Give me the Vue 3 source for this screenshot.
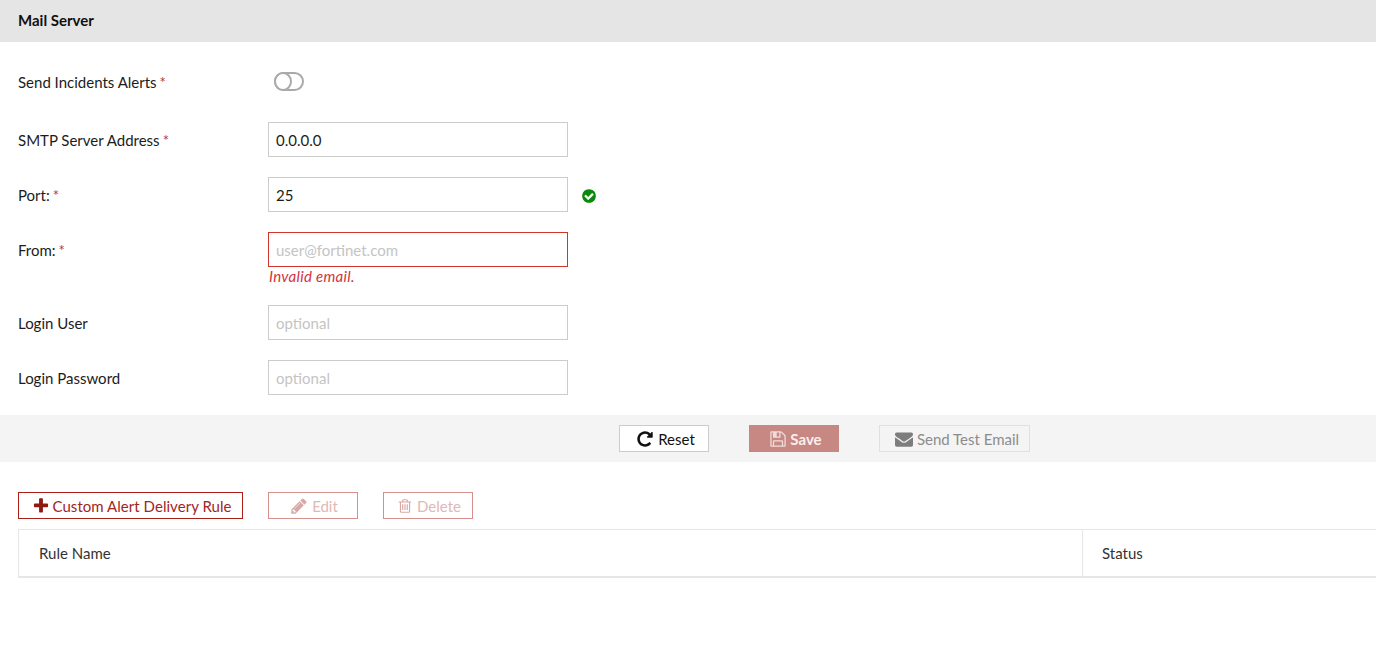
<script setup>
const icons = {
  check: 'M1412 734q0-28-18-46l-91-90q-19-19-45-19t-45 19l-408 407-226-226q-19-19-45-19t-45 19l-91 90q-18 18-18 46 0 27 18 45l362 362q19 19 45 19 27 0 46-19l543-543q18-18 18-45zm252 162q0 209-103 385.500t-279.500 279.500-385.500 103-385.500-103-279.500-279.500-103-385.500 103-385.500 279.500-279.500 385.500-103 385.500 103 279.500 279.500 103 385.500z',
  repeat: 'M1664 256v448q0 26-19 45t-45 19h-448q-42 0-59-40-17-39 14-69l138-138q-148-137-349-137-104 0-198.500 40.500t-163.500 109.500-109.500 163.500-40.500 198.500 40.500 198.500 109.500 163.500 163.500 109.500 198.500 40.500q119 0 225-52t179-147q7-10 23-12 15 0 25 9l137 138q9 8 9.500 20.500t-7.500 22.500q-109 132-264 204.500t-327 72.500q-156 0-298-61t-245-164-164-245-61-298 61-298 164-245 245-164 298-61q147 0 284.500 55.500t244.500 156.500l130-129q29-31 70-14 39 17 39 59z',
  save: 'M512 1536h768v-384h-768v384zm896 0h128v-896q0-14-10-38.500t-20-34.500l-281-281q-10-10-34-20t-39-10v416q0 40-28 68t-68 28h-576q-40 0-68-28t-28-68v-416h-128v1280h128v-416q0-40 28-68t68-28h832q40 0 68 28t28 68v416zm-384-928v-320q0-13-9.500-22.500t-22.500-9.500h-192q-13 0-22.500 9.500t-9.500 22.500v320q0 13 9.500 22.500t22.500 9.500h192q13 0 22.500-9.500t9.500-22.500zm640 32v928q0 40-28 68t-68 28h-1344q-40 0-68-28t-28-68v-1344q0-40 28-68t68-28h928q40 0 88 20t76 48l280 280q28 28 48 76t20 88z',
  envelope: 'M1792 710v794q0 66-47 113t-113 47h-1472q-66 0-113-47t-47-113v-794q44 49 101 87 362 246 497 345 57 42 92.500 65.500t94.500 48 110 24.500h2q51 0 110-24.500t94.500-48 92.500-65.500q170-123 498-345 57-39 100-87zm0-294q0 79-49 151t-122 123q-376 261-468 325-10 7-42.500 30.500t-54 38-52 32.500-57.500 27-50 9h-2q-23 0-50-9t-57.500-27-52-32.500-54-38-42.500-30.500q-91-64-262-182.500t-205-142.500q-62-42-117-115.500t-55-136.500q0-78 41.500-130t118.500-52h1472q65 0 112.500 47t47.500 113z',
  plus: 'M1600 736v192q0 40-28 68t-68 28h-416v416q0 40-28 68t-68 28h-192q-40 0-68-28t-28-68v-416h-416q-40 0-68-28t-28-68v-192q0-40 28-68t68-28h416v-416q0-40 28-68t68-28h192q40 0 68 28t28 68v416h416q40 0 68 28t28 68z',
  pencil: 'M491 1536l91-91-235-235-91 91v107h128v128h107zm523-928q0-22-22-22-10 0-17 7l-542 542q-7 7-7 17 0 22 22 22 10 0 17-7l542-542q7-7 7-17zm-54-192l416 416-832 832h-416v-416zm683 96q0 53-37 90l-166 166-416-416 166-165q36-38 90-38 53 0 91 38l235 234q37 39 37 91z',
  trash: 'M704 736v576q0 14-9 23t-23 9h-64q-14 0-23-9t-9-23v-576q0-14 9-23t23-9h64q14 0 23 9t9 23zm256 0v576q0 14-9 23t-23 9h-64q-14 0-23-9t-9-23v-576q0-14 9-23t23-9h64q14 0 23 9t9 23zm256 0v576q0 14-9 23t-23 9h-64q-14 0-23-9t-9-23v-576q0-14 9-23t23-9h64q14 0 23 9t9 23zm128 724v-948h-896v948q0 22 7 40.500t14.500 27 10.500 8.500h832q3 0 10.500-8.500t14.500-27 7-40.500zm-672-1076h448l-48-117q-7-9-17-11h-317q-10 2-17 11zm928 32v64q0 14-9 23t-23 9h-96v948q0 83-47 143.500t-113 60.500h-832q-66 0-113-58.500t-47-141.500v-952h-96q-14 0-23-9t-9-23v-64q0-14 9-23t23-9h309l70-167q15-37 54-63t79-26h320q40 0 79 26t54 63l70 167h309q14 0 23 9t9 23z'
}
</script>

<template>
  <div class="page">
    <header class="head">Mail Server</header>

    <form class="form" @submit.prevent>
      <div class="row toggle-row">
        <label class="label">Send Incidents Alerts<span class="req">*</span></label>
        <span class="toggle"><span class="knob"></span></span>
      </div>
      <div class="row">
        <label class="label">SMTP Server Address<span class="req">*</span></label>
        <input class="input" value="0.0.0.0" />
      </div>
      <div class="row">
        <label class="label">Port:<span class="req">*</span></label>
        <input class="input" value="25" />
        <svg class="valid" viewBox="0 0 1792 1792"><path :d="icons.check" /></svg>
      </div>
      <div class="row row-error">
        <label class="label">From:<span class="req">*</span></label>
        <div class="stack">
          <input class="input invalid" placeholder="user@fortinet.com" />
          <div class="error">Invalid email.</div>
        </div>
      </div>
      <div class="row">
        <label class="label">Login User</label>
        <input class="input" placeholder="optional" />
      </div>
      <div class="row">
        <label class="label">Login Password</label>
        <input class="input" placeholder="optional" />
      </div>
    </form>

    <div class="actions">
      <button class="btn reset" type="button">
        <svg class="ico" viewBox="0 0 1792 1792"><path :d="icons.repeat" /></svg>Reset
      </button>
      <button class="btn save" type="button">
        <svg class="ico" viewBox="0 0 1792 1792"><path :d="icons.save" /></svg>Save
      </button>
      <button class="btn test" type="button">
        <svg class="ico" viewBox="0 0 1792 1792"><path :d="icons.envelope" /></svg>Send Test Email
      </button>
    </div>

    <div class="toolbar">
      <button class="tbtn add" type="button">
        <svg class="ico" viewBox="0 0 1792 1792"><path :d="icons.plus" /></svg>Custom Alert Delivery Rule
      </button>
      <button class="tbtn off edit" type="button">
        <svg class="ico" viewBox="0 0 1792 1792"><path :d="icons.pencil" /></svg>Edit
      </button>
      <button class="tbtn off del" type="button">
        <svg class="ico" viewBox="0 0 1792 1792"><path :d="icons.trash" /></svg>Delete
      </button>
    </div>

    <div class="table">
      <div class="cell name">Rule Name</div>
      <div class="cell status">Status</div>
    </div>
  </div>
</template>

<style>
html, body { margin: 0; background: #fff; }
</style>

<style scoped>
.page {
  font-family: Lato, "Liberation Sans", sans-serif;
  font-size: 15px;
  color: #1c1c1c;
  height: 646px;
  overflow: hidden;
  background: #fff;
}
.head {
  height: 42px;
  line-height: 41px;
  padding-left: 18px;
  background: #e5e5e5;
  font-weight: 700;
  color: #111;
}
.form {
  display: flex;
  flex-direction: column;
  gap: 20px;
  padding: 20px 0 20px 18px;
}
.row {
  display: flex;
  align-items: center;
  height: 35px;
}
.toggle-row { height: 40px; }
.row-error { height: 53px; align-items: flex-start; }
.row-error .label { line-height: 37px; }
.label {
  width: 250px;
  flex: none;
}
.req {
  color: #b83a32;
  margin-left: 3px;
}
.toggle {
  display: block;
  box-sizing: border-box;
  position: relative;
  width: 30px;
  height: 19px;
  margin-left: 6px;
  margin-top: -1px;
  border: 2px solid #aaa;
  border-radius: 10px;
}
.knob {
  position: absolute;
  left: -2px;
  top: -2px;
  box-sizing: border-box;
  width: 18px;
  height: 19px;
  border: 2px solid #aaa;
  border-radius: 50%;
  background: #fff;
}
.input {
  box-sizing: border-box;
  display: block;
  width: 300px;
  height: 35px;
  padding: 0 7px;
  border: 1px solid #ccc;
  border-radius: 0;
  outline: none;
  font: inherit;
  color: #1c1c1c;
  background: #fff;
}
.input::placeholder { color: #c4c4c4; opacity: 1; }
.input.invalid { border-color: #d2332b; }
.error {
  height: 18px;
  line-height: 19px;
  padding-left: 1px;
  font-style: italic;
  letter-spacing: 0.3px;
  color: #d2323c;
}
.valid {
  width: 16px;
  height: 16px;
  margin: 2px 0 0 13px;
  fill: #0a8a0a;
}
.actions {
  display: flex;
  height: 47px;
  padding-top: 10px;
  padding-left: 619px;
  box-sizing: border-box;
  gap: 40px;
  background: #f4f4f4;
}
.btn, .tbtn {
  display: flex;
  align-items: center;
  justify-content: center;
  box-sizing: border-box;
  height: 27px;
  border-radius: 0;
  font: inherit;
  background: #fff;
}
.btn { padding: 0 0 0 3px; }
.tbtn { padding: 0 0 0 2px; }
.ico {
  width: 18px;
  height: 18px;
  margin-right: 4px;
  fill: currentColor;
}
.btn { width: 90px; }
.reset { border: 1px solid #ccc; color: #111; }
.save {
  border: 0;
  background: #c78883;
  color: #fbeeee;
  font-weight: 700;
}
.save .ico { margin-right: 3px; fill: #f0dcda; }
.test {
  width: 151px;
  padding-left: 5px;
  border: 1px solid #e0e0e0;
  background: #f4f4f4;
  color: #8c8c8c;
}
.test .ico { fill: #7d7d7d; }
.toolbar {
  display: flex;
  gap: 25px;
  padding: 30px 0 10px 18px;
}
.tbtn {
  border: 1px solid #a81f16;
  color: #a3251d;
  width: 90px;
}
.add { width: 225px; letter-spacing: 0.04px; }
.add .ico { margin-right: 3px; fill: #8f1a12; }
.off {
  border-color: #d68f8a;
  color: #e0b8b5;
}
.edit .ico, .del .ico { fill: #d9a8a4; }
.del .ico { width: 16px; height: 16px; }
.table {
  display: flex;
  box-sizing: border-box;
  height: 49px;
  margin-left: 18px;
  border: 1px solid #e6e6e6;
  border-bottom-width: 2px;
  border-right: 0;
}
.cell {
  display: flex;
  align-items: center;
  color: #333;
}
.name {
  width: 1064px;
  padding-left: 20px;
  box-sizing: border-box;
  border-right: 1px solid #e6e6e6;
}
.status { padding-left: 19px; }
</style>
